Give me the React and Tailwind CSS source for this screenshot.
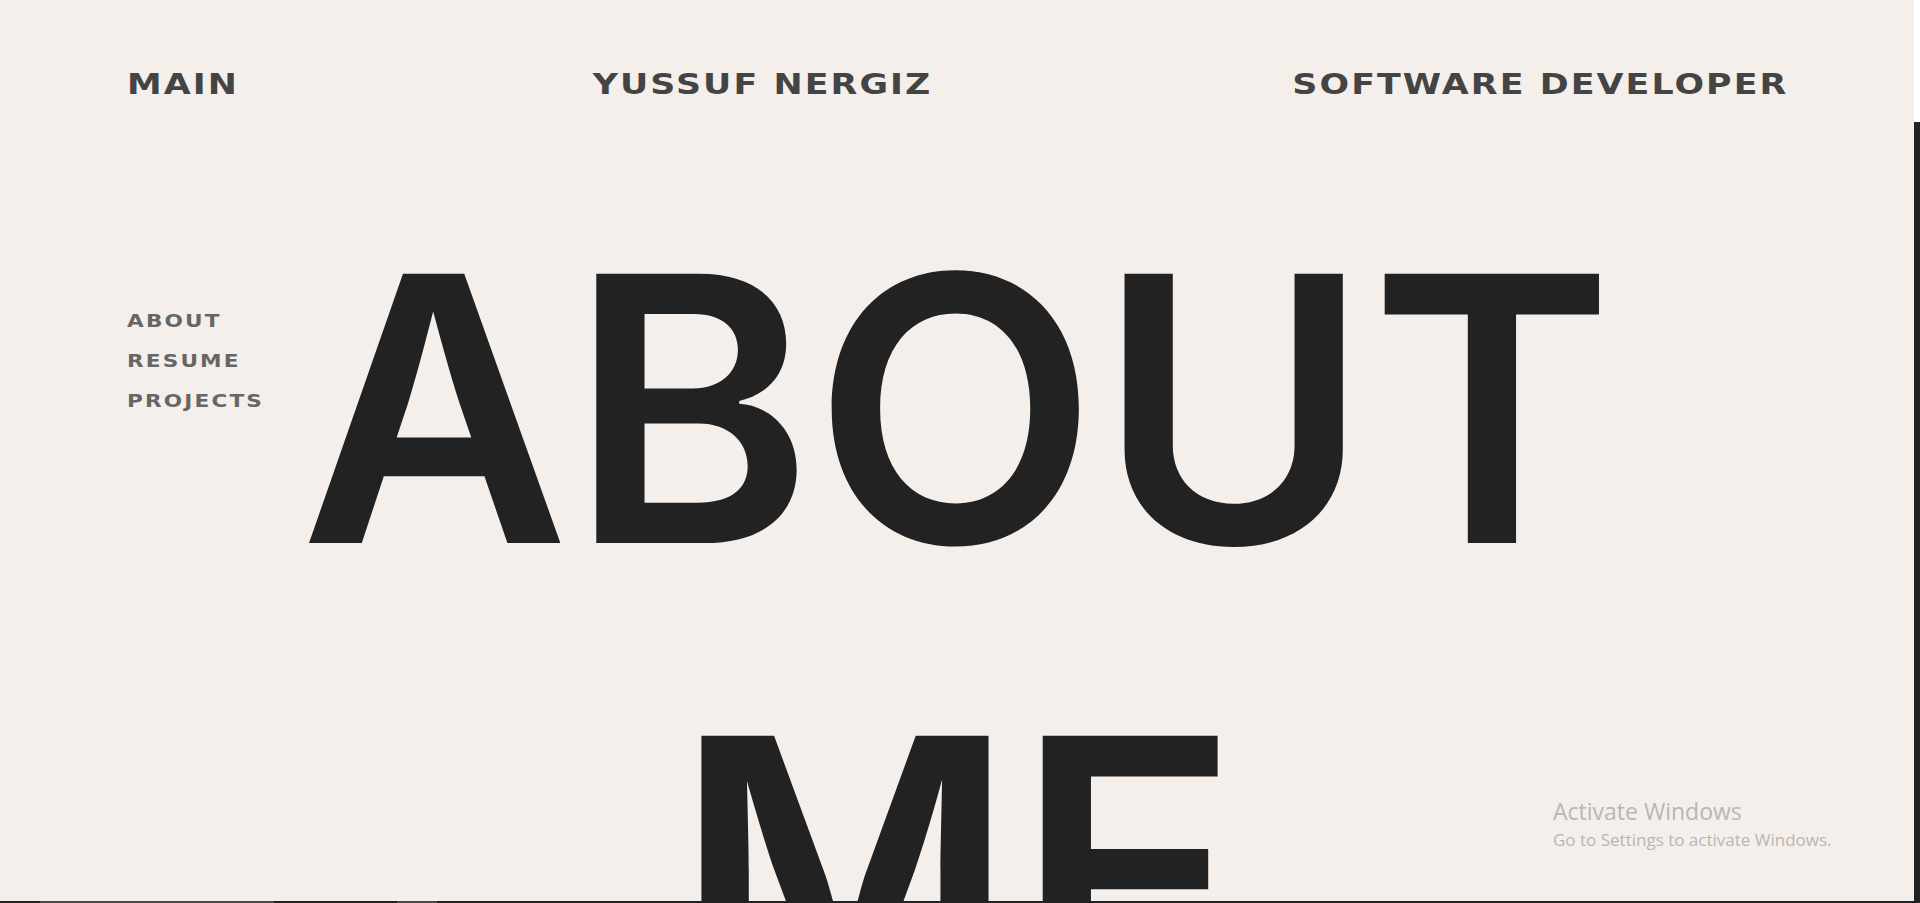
import React from "react";

const navLinks = ["ABOUT", "RESUME", "PROJECTS"];

const App = () => {
  return (
    <div className="flex h-[903px] w-[1920px] overflow-hidden bg-[#222]">
      {/* page area */}
      <div className="flex w-[1914px] flex-col">
        <div className="relative h-[901px] overflow-hidden bg-[#f4efeb]">
          {/* top bar */}
          <header
            className="flex justify-between px-[127px] pt-[70px] text-[29px] font-bold leading-[29px] tracking-[0.06em] text-[#444]"
            style={{ fontFamily: '"DejaVu Sans", sans-serif' }}
          >
            <span className="origin-left scale-x-[1.2]">MAIN</span>
            <span className="mr-[70px] origin-center scale-x-[1.2]">YUSSUF NERGIZ</span>
            <span className="-mr-[0.06em] origin-right scale-x-[1.2]">
              SOFTWARE DEVELOPER
            </span>
          </header>

          {/* sidebar + heading share one grid cell */}
          <div className="mt-[79px] grid px-[127px]">
            <h1
              className="col-start-1 row-start-1 text-center text-[370px] font-semibold leading-[462px] text-[#222]"
              style={{ fontFamily: "Inter, sans-serif" }}
            >
              ABOUT
              <br />
              ME
            </h1>
            <nav
              className="col-start-1 row-start-1 mt-[123px] flex origin-left scale-x-[1.2] flex-col self-start justify-self-start text-[18px] font-bold leading-[40px] tracking-[0.1em] text-[#666]"
              style={{ fontFamily: '"DejaVu Sans", sans-serif' }}
            >
              {navLinks.map((l) => (
                <a key={l} href="#">
                  {l}
                </a>
              ))}
            </nav>
          </div>

          {/* windows watermark */}
          <div
            className="absolute left-[1553px] top-[795px] text-[#b9b6b3]"
            style={{ fontFamily: '"Open Sans", "Noto Sans", sans-serif' }}
          >
            <div className="text-[23px] leading-[32px]">Activate Windows</div>
            <div className="mt-[2px] text-[17px] leading-[22px]">
              Go to Settings to activate Windows.
            </div>
          </div>
        </div>
        {/* taskbar edge */}
        <div className="flex h-[2px] bg-[#222]">
          <div className="ml-[40px] w-[234px] bg-[#4a4a4a]" />
          <div className="ml-[123px] w-[40px] bg-[#4a4a4a]" />
        </div>
      </div>

      {/* scrollbar strip */}
      <div className="flex w-[6px] flex-col">
        <div className="h-[122px] bg-white" />
        <div className="flex-1 bg-[#222]" />
      </div>
    </div>
  );
};

export default App;
